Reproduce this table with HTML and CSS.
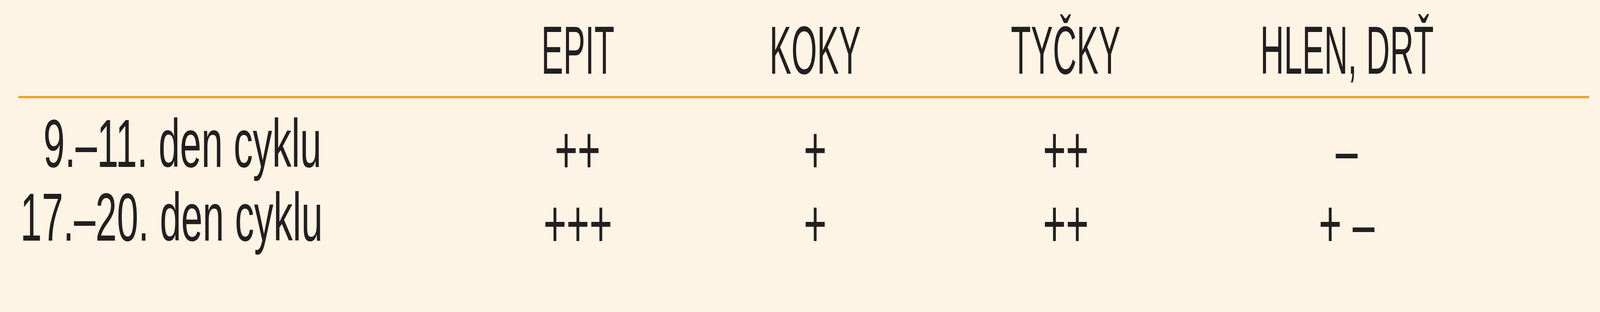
FILE: index.html
```html
<!DOCTYPE html>
<html lang="cs">
<head>
<meta charset="utf-8">
<title>Tabulka</title>
<link rel="stylesheet" href="styles.css">
</head>
<body>
<div class="table">
  <div class="row head">
    <div class="cell label"></div>
    <div class="cell"><span class="t">EPIT</span></div>
    <div class="cell"><span class="t">KOKY</span></div>
    <div class="cell"><span class="t">TYČKY</span></div>
    <div class="cell"><span class="t">HLEN, DRŤ</span></div>
    <div class="cell"></div>
  </div>
  <div class="rule"></div>
  <div class="row first">
    <div class="cell label indent"><span class="t">9.–11. den cyklu</span></div>
    <div class="cell val"><span class="t">++</span></div>
    <div class="cell val"><span class="t">+</span></div>
    <div class="cell val"><span class="t">++</span></div>
    <div class="cell val"><span class="t">–</span></div>
    <div class="cell"></div>
  </div>
  <div class="row">
    <div class="cell label"><span class="t">17.–20. den cyklu</span></div>
    <div class="cell val"><span class="t">+++</span></div>
    <div class="cell val"><span class="t">+</span></div>
    <div class="cell val"><span class="t">++</span></div>
    <div class="cell val"><span class="t">+ –</span></div>
    <div class="cell"></div>
  </div>
</div>
</body>
</html>
```
FILE: styles.css
```css
:root {
  --u: calc(100vw / 6098);
  --sx: 1;
}
@media (max-width: 4096px) {
  :root {
    --sx: 0.671695;
  }
}
html, body {
  margin: 0;
  padding: 0;
}
body {
  background: #FEF4E5;
  height: 800px;
  overflow: hidden;
  color: #231F20;
  font-family: "Liberation Sans", Arial, sans-serif;
  font-size: 174px;
}
.table {
  margin-left: calc(var(--u) * 70);
  width: calc(var(--u) * 5986);
  padding-top: 34px;
}
.row {
  display: grid;
  grid-template-columns:
    calc(var(--u) * 1680)
    calc(var(--u) * 904)
    calc(var(--u) * 906)
    calc(var(--u) * 1004)
    calc(var(--u) * 1138)
    calc(var(--u) * 354);
  height: 189px;
  line-height: 189px;
}
.head {
  padding-bottom: 23px;
}
.first {
  margin-top: 21px;
}
.cell {
  display: flex;
  justify-content: center;
  align-items: flex-start;
  white-space: nowrap;
  min-width: 0;
}
.t {
  display: block;
  flex: none;
  transform: scaleX(calc(0.72 * var(--sx)));
  transform-origin: 50% 50%;
}
.label {
  justify-content: flex-start;
  padding-left: calc(var(--u) * 8);
}
.label.indent {
  padding-left: calc(var(--u) * 95);
}
.label .t {
  transform: scaleX(calc(0.845 * var(--sx)));
  transform-origin: 0 50%;
}
.val .t {
  transform: translateY(16px) scaleX(calc(0.86 * var(--sx)));
}
.rule {
  height: 6px;
  background: #EFA22B;
}
```
